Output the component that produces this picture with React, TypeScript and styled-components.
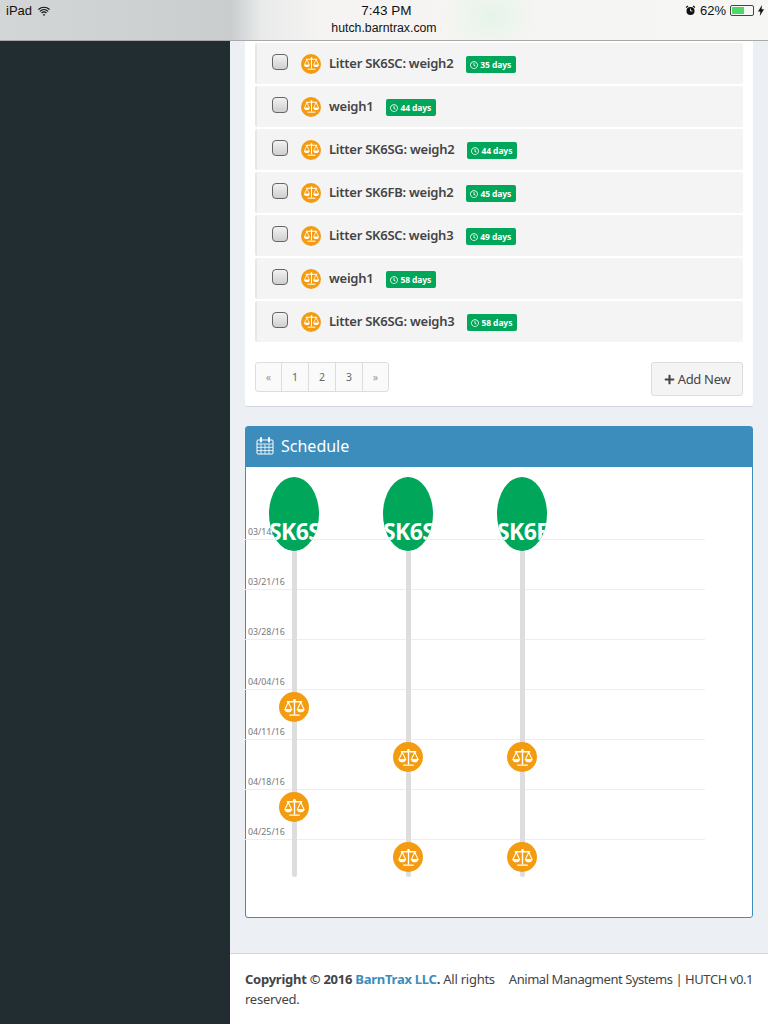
import styled, { createGlobalStyle } from "styled-components";
import { FaPlus, FaRegClock } from "react-icons/fa";
import { IoWifi } from "react-icons/io5";

const GlobalStyle = createGlobalStyle`
  html, body {
    margin: 0;
    padding: 0;
    background: #ecf0f5;
  }
  * {
    box-sizing: border-box;
  }
`;

const Page = styled.div`
  width: 768px;
  height: 1024px;
  overflow: hidden;
  display: flex;
  flex-direction: column;
  font-family: "Noto Sans", "Open Sans", sans-serif;
  color: #444;
`;

const StatusBar = styled.header`
  height: 41px;
  flex: none;
  display: grid;
  grid-template-columns: 1fr auto 1fr;
  padding: 0 4px 0 6px;
  border-bottom: 1px solid #a9a9a9;
  background:
    radial-gradient(ellipse 48px 36px at 490px 16px, #e6f4e9 0%, rgba(240, 247, 241, 0) 100%),
    linear-gradient(90deg, #d3d6d6 0%, #cdd0d0 22%, #c9cdcd 30%, #e9eaea 34%, #f5f4f2 42%, #f6f6f5 100%);
  font-family: "Liberation Sans", Arial, sans-serif;
  color: #111;
`;

const StatusLeft = styled.div`
  display: flex;
  align-items: center;
  gap: 5px;
  height: 21px;
  font-size: 13px;
`;

const StatusCenter = styled.div`
  display: flex;
  flex-direction: column;
  align-items: center;
  padding-top: 3px;
`;

const Clock = styled.span`
  font-size: 13.5px;
  line-height: 16px;
  margin-left: 3px;
`;

const Host = styled.span`
  font-size: 12.3px;
  line-height: 16px;
  margin: 1px 2px 0 0;
`;

const StatusRight = styled.div`
  display: flex;
  justify-content: flex-end;
  align-items: center;
  gap: 4px;
  height: 21px;
  font-size: 13px;
`;

const Battery = styled.span`
  position: relative;
  width: 24px;
  height: 11px;
  border: 1px solid #444;
  border-radius: 2px;
  padding: 1px;
  display: block;
`;

const BatteryFill = styled.span`
  display: block;
  width: 62%;
  height: 100%;
  background: #4cd964;
`;

const Body = styled.div`
  flex: 1;
  min-height: 0;
  display: flex;
`;

const Sidebar = styled.aside`
  width: 230px;
  flex: none;
  background: #222d32;
`;

const Main = styled.main`
  flex: 1;
  min-width: 0;
  display: flex;
  flex-direction: column;
`;

const Content = styled.div`
  flex: 1;
  padding: 0 15px;
`;

const TodoCard = styled.section`
  background: #fff;
  border-bottom: 1px solid #d2d6de;
  border-radius: 0 0 3px 3px;
  padding: 2px 10px 10px;
  margin-bottom: 19px;
`;

const TodoList = styled.ul`
  list-style: none;
  margin: 0;
  padding: 0;
`;

const TodoRow = styled.li`
  height: 41px;
  margin-bottom: 2px;
  display: flex;
  align-items: center;
  padding-left: 15px;
  background: #f4f4f4;
  border-left: 2px solid #e6e7e8;
  border-radius: 2px;
`;

const CheckBox = styled.span`
  width: 16px;
  height: 16px;
  flex: none;
  margin: -4px 13px 0 0;
  border: 1px solid #666;
  border-radius: 4px;
  background: linear-gradient(#f2f2f2, #cfcfcf);
`;

const RowBadge = styled.span`
  width: 20px;
  height: 20px;
  flex: none;
  margin-right: 8px;
  border-radius: 50%;
  background: #f39c12;
  display: flex;
  align-items: center;
  justify-content: center;
  color: #fff;
`;

const RowText = styled.span`
  font-size: 13px;
  font-weight: 600;
  letter-spacing: -0.25px;
  color: #444;
  margin: -2px 13px 0 0;
`;

const Label = styled.span`
  height: 17px;
  padding: 0 5px 0 4px;
  margin-top: 2px;
  display: inline-flex;
  align-items: center;
  gap: 2px;
  border-radius: 2px;
  background: #00a65a;
  color: #fff;
  font-size: 8.5px;
  font-weight: 700;
  letter-spacing: -0.1px;
`;

const ListFooter = styled.div`
  display: flex;
  justify-content: space-between;
  align-items: flex-start;
  margin-top: 20px;
`;

const Pager = styled.ul`
  display: flex;
  list-style: none;
  margin: 0;
  padding: 0;
`;

const PageItem = styled.li<{ $arrow?: boolean }>`
  width: 28px;
  height: 30px;
  margin-left: -1px;
  display: flex;
  align-items: center;
  justify-content: center;
  border: 1px solid #ddd;
  background: #fafafa;
  color: ${(props) => (props.$arrow ? "#999" : "#666")};
  font-size: 10.5px;

  &:first-child {
    width: 27px;
    margin-left: 0;
    border-radius: 3px 0 0 3px;
  }
  &:last-child {
    width: 27px;
    border-radius: 0 3px 3px 0;
  }
`;

const AddButton = styled.button`
  width: 92px;
  height: 34px;
  padding: 0;
  display: flex;
  align-items: center;
  justify-content: center;
  gap: 3px;
  border: 1px solid #ddd;
  border-radius: 3px;
  background: #f4f4f4;
  color: #444;
  font-family: inherit;
  font-size: 13px;
  letter-spacing: -0.3px;
`;

const SchedulePanel = styled.section`
  height: 492px;
  background: #fff;
  border: 1px solid #3c8dbc;
  border-radius: 3px;
`;

const PanelHead = styled.div`
  height: 40px;
  display: flex;
  align-items: center;
  gap: 7px;
  padding: 0 0 2px 10px;
  background: #3c8dbc;
  color: #fff;
  font-size: 16px;
`;

const Timeline = styled.div`
  position: relative;
  width: 460px;
  margin-left: -1px;
  padding-top: 23px;
`;

const WeekRow = styled.div`
  height: 50px;
  display: flex;
  align-items: flex-end;
  padding-left: 3px;
  border-bottom: 1px solid #eee;
  font-size: 8.8px;
  line-height: 13px;
  color: #777;
`;

const Lane = styled.div<{ $left: number }>`
  position: absolute;
  top: 10px;
  left: ${(props) => props.$left}px;
  width: 50px;
  height: 400px;
`;

const Track = styled.div`
  position: absolute;
  left: 23px;
  top: 0;
  width: 5px;
  height: 400px;
  border-radius: 2px;
  background: #ddd;
`;

const LaneHead = styled.div`
  position: absolute;
  inset: 0 0 auto 0;
  height: 74px;
  overflow: hidden;
  border-radius: 50%;
  background: #00a65a;
  color: #fff;
  font-size: 23px;
  font-weight: 700;
  line-height: 30px;
  letter-spacing: -0.6px;
  padding-top: 39px;
  white-space: nowrap;
`;

const Marker = styled.div<{ $top: number }>`
  position: absolute;
  left: 10px;
  top: ${(props) => props.$top}px;
  width: 30px;
  height: 30px;
  border-radius: 50%;
  background: #f39c12;
  color: #fff;
  display: flex;
  align-items: center;
  justify-content: center;
`;

const Footer = styled.footer`
  height: 71px;
  flex: none;
  display: flex;
  justify-content: space-between;
  padding: 15px 15px 0;
  border-top: 1px solid #d2d6de;
  background: #fff;
  font-size: 13px;
  line-height: 20px;
  letter-spacing: -0.25px;
`;

const Copyright = styled.div`
  width: 258px;
`;

const FooterNote = styled.div`
  white-space: nowrap;
  letter-spacing: -0.44px;
`;

const BrandLink = styled.a`
  color: #3c8dbc;
  text-decoration: none;
`;

const ScaleIcon = ({ size }: { size: number }) => (
  <svg width={size} height={size} viewBox="0 0 24 24" fill="none" stroke="currentColor" strokeWidth="1.1">
    <path d="M4 6h16M12 4v15M6.500 20h11" strokeWidth="1.400" />
    <circle cx="12" cy="4.500" r="1.300" fill="currentColor" stroke="none" />
    <path d="M5.500 6.500 2 14h7zM18.500 6.500 15 14h7z" />
    <path d="M1.500 14c.5 2.200 2.200 3 4 3s3.500-.8 4-3zM14.500 14c.5 2.200 2.200 3 4 3s3.500-.8 4-3z" fill="currentColor" stroke="none" />
  </svg>
);

const CalendarIcon = () => (
  <svg width="18" height="18" viewBox="0 0 18 18" fill="none" stroke="currentColor" strokeWidth="1">
    <rect x="1" y="3" width="16" height="14" rx="1" />
    <path d="M1 7h16M1 10.300h16M1 13.600h16M5 7v10M9 7v10M13 7v10" strokeWidth=".8" />
    <path d="M5 1v3.500M13 1v3.500" strokeWidth="2" strokeLinecap="round" />
  </svg>
);

const todos = [
  { text: "Litter SK6SC: weigh2", days: 35 },
  { text: "weigh1", days: 44 },
  { text: "Litter SK6SG: weigh2", days: 44 },
  { text: "Litter SK6FB: weigh2", days: 45 },
  { text: "Litter SK6SC: weigh3", days: 49 },
  { text: "weigh1", days: 58 },
  { text: "Litter SK6SG: weigh3", days: 58 },
];

const weeks = ["03/14/16", "03/21/16", "03/28/16", "04/04/16", "04/11/16", "04/18/16", "04/25/16"];

const lanes = [
  { left: 24, name: "SK6SC", events: [215, 315] },
  { left: 138, name: "SK6SG", events: [265, 365] },
  { left: 252, name: "SK6FB", events: [265, 365] },
];

export default function App() {
  return (
    <Page>
      <GlobalStyle />
      <StatusBar>
        <StatusLeft>
          iPad <IoWifi size={14} />
        </StatusLeft>
        <StatusCenter>
          <Clock>7:43 PM</Clock>
          <Host>hutch.barntrax.com</Host>
        </StatusCenter>
        <StatusRight>
          <svg width="11" height="11" viewBox="0 0 11 11">
            <circle cx="5.500" cy="6" r="4" fill="#111" />
            <path d="M1 2.500 3 1M10 2.500 8 1" stroke="#111" strokeWidth="1.200" />
            <path d="M5.500 3.500V6h2" stroke="#fff" strokeWidth=".8" fill="none" />
          </svg>
          62%
          <Battery>
            <BatteryFill />
          </Battery>
          <svg width="6" height="11" viewBox="0 0 6 11">
            <path d="M4 0 0 6.500h2.400L1.800 11 6 4.300H3.500z" fill="#111" />
          </svg>
        </StatusRight>
      </StatusBar>
      <Body>
        <Sidebar />
        <Main>
          <Content>
            <TodoCard>
              <TodoList>
                {todos.map((todo, i) => (
                  <TodoRow key={i}>
                    <CheckBox />
                    <RowBadge>
                      <ScaleIcon size={17} />
                    </RowBadge>
                    <RowText>{todo.text}</RowText>
                    <Label>
                      <FaRegClock size={8} />
                      {todo.days} days
                    </Label>
                  </TodoRow>
                ))}
              </TodoList>
              <ListFooter>
                <Pager>
                  <PageItem $arrow>«</PageItem>
                  <PageItem>1</PageItem>
                  <PageItem>2</PageItem>
                  <PageItem>3</PageItem>
                  <PageItem $arrow>»</PageItem>
                </Pager>
                <AddButton>
                  <FaPlus size={11} />
                  Add New
                </AddButton>
              </ListFooter>
            </TodoCard>
            <SchedulePanel>
              <PanelHead>
                <CalendarIcon />
                Schedule
              </PanelHead>
              <Timeline>
                {weeks.map((week) => (
                  <WeekRow key={week}>{week}</WeekRow>
                ))}
                {lanes.map((lane) => (
                  <Lane key={lane.name} $left={lane.left}>
                    <Track />
                    <LaneHead>{lane.name}</LaneHead>
                    {lane.events.map((top) => (
                      <Marker key={top} $top={top}>
                        <ScaleIcon size={23} />
                      </Marker>
                    ))}
                  </Lane>
                ))}
              </Timeline>
            </SchedulePanel>
          </Content>
          <Footer>
            <Copyright>
              <strong>
                Copyright © 2016 <BrandLink href="#">BarnTrax LLC</BrandLink>.
              </strong>{" "}
              All rights reserved.
            </Copyright>
            <FooterNote>Animal Managment Systems | HUTCH v0.1</FooterNote>
          </Footer>
        </Main>
      </Body>
    </Page>
  );
}
